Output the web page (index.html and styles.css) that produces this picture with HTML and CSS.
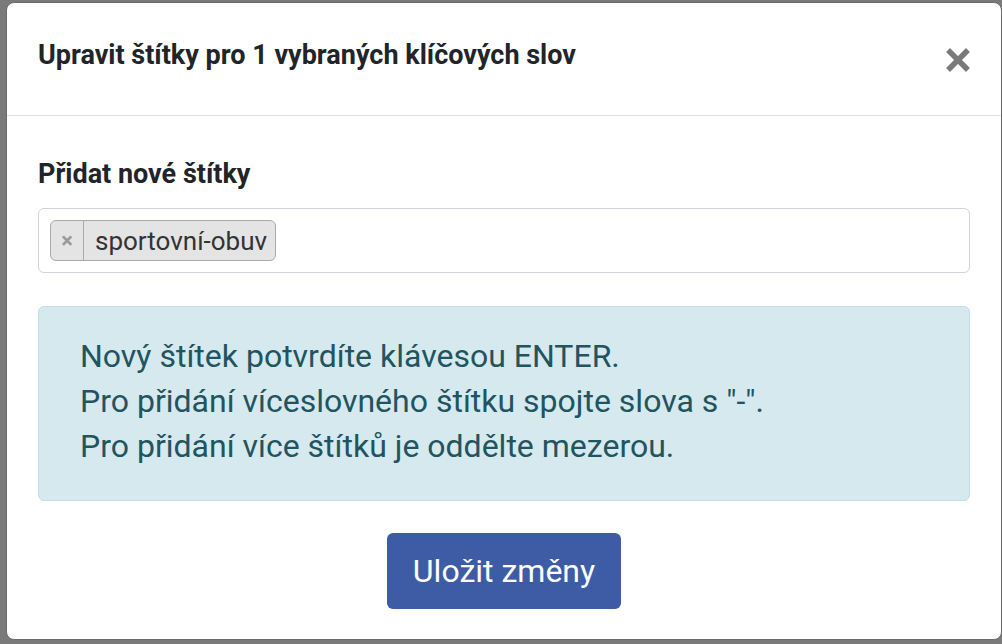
FILE: index.html
```html
<!DOCTYPE html>
<html lang="cs">
<head>
<meta charset="utf-8">
<link rel="stylesheet" href="styles.css">
</head>
<body>
<div class="backdrop">
  <div class="modal">
    <div class="modal-header">
      <h5 class="modal-title">Upravit štítky pro 1 vybraných klíčových slov</h5>
      <span class="close">
        <svg width="24" height="24" viewBox="0 0 24 24"><path d="M4 4 L20 20 M20 4 L4 20" stroke="#7a7a7a" stroke-width="5.5" stroke-linecap="square"/></svg>
      </span>
    </div>
    <div class="modal-body">
      <label class="label">Přidat nové štítky</label>
      <div class="tag-input">
        <span class="tag"><span class="tag-x">×</span><span class="tag-text">sportovní-obuv</span></span>
      </div>
      <div class="alert">
        <p>Nový štítek potvrdíte klávesou ENTER.</p>
        <p>Pro přidání víceslovného štítku spojte slova s "-".</p>
        <p>Pro přidání více štítků je oddělte mezerou.</p>
      </div>
      <div class="actions">
        <button class="btn">Uložit změny</button>
      </div>
    </div>
  </div>
</div>
</body>
</html>
```

FILE: styles.css
```css
html, body {
  margin: 0;
  padding: 0;
  background: #7a7a7a;
  font-family: Roboto, "Noto Sans", Arial, sans-serif;
  overflow: hidden;
}
.backdrop {
  width: 1002px;
  height: 644px;
  padding: 2px 0 0 6px;
  box-sizing: border-box;
}
.modal {
  width: 996px;
  height: 638px;
  background: #fff;
  border-radius: 8px;
  border: 1px solid #6a6a6a;
  box-sizing: border-box;
  display: flex;
  flex-direction: column;
}
.modal-header {
  height: 113px;
  box-sizing: border-box;
  border-bottom: 1px solid #dee2e6;
  display: flex;
  align-items: center;
  justify-content: space-between;
  padding: 0 31px 0 31px;
}
.modal-title {
  margin: 0;
  font-size: 27px;
  font-weight: 700;
  color: #212529;
  line-height: 32px;
  position: relative;
  top: -4px;
}
.close {
  display: flex;
  width: 24px;
  height: 24px;
  position: relative;
  top: 1px;
}
.modal-body {
  padding: 42px 31px 0 31px;
  display: flex;
  flex-direction: column;
}
.label {
  font-size: 27px;
  font-weight: 700;
  color: #212529;
  line-height: 32px;
}
.tag-input {
  margin-top: 18px;
  height: 65px;
  box-sizing: border-box;
  border: 1px solid #ced4da;
  border-radius: 6px;
  padding: 11px 11px;
  display: flex;
  align-items: flex-start;
}
.tag {
  display: inline-flex;
  height: 41px;
  box-sizing: border-box;
  background: #e4e4e4;
  border: 1px solid #aaa;
  border-radius: 6px;
  align-items: stretch;
}
.tag-x {
  width: 32px;
  border-right: 1px solid #aaa;
  display: flex;
  align-items: center;
  justify-content: center;
  color: #999;
  font-size: 22px;
  font-weight: 700;
}
.tag-text {
  padding: 0 8px 0 11px;
  display: flex;
  align-items: center;
  font-size: 26px;
  color: #333;
}
.alert {
  margin-top: 33px;
  height: 195px;
  box-sizing: border-box;
  background: #d5e9ee;
  border: 1px solid #bee0e6;
  border-radius: 6px;
  padding: 27px 41px 0 41px;
  color: #22545f;
  font-size: 32px;
}
.alert p {
  margin: 0;
  line-height: 45px;
}
.actions {
  margin-top: 32px;
  display: flex;
  justify-content: center;
}
.btn {
  width: 234px;
  height: 76px;
  border: none;
  border-radius: 6px;
  background: #3d5ca5;
  color: #fff;
  font-family: Roboto, "Noto Sans", Arial, sans-serif;
  font-size: 32px;
}
```
